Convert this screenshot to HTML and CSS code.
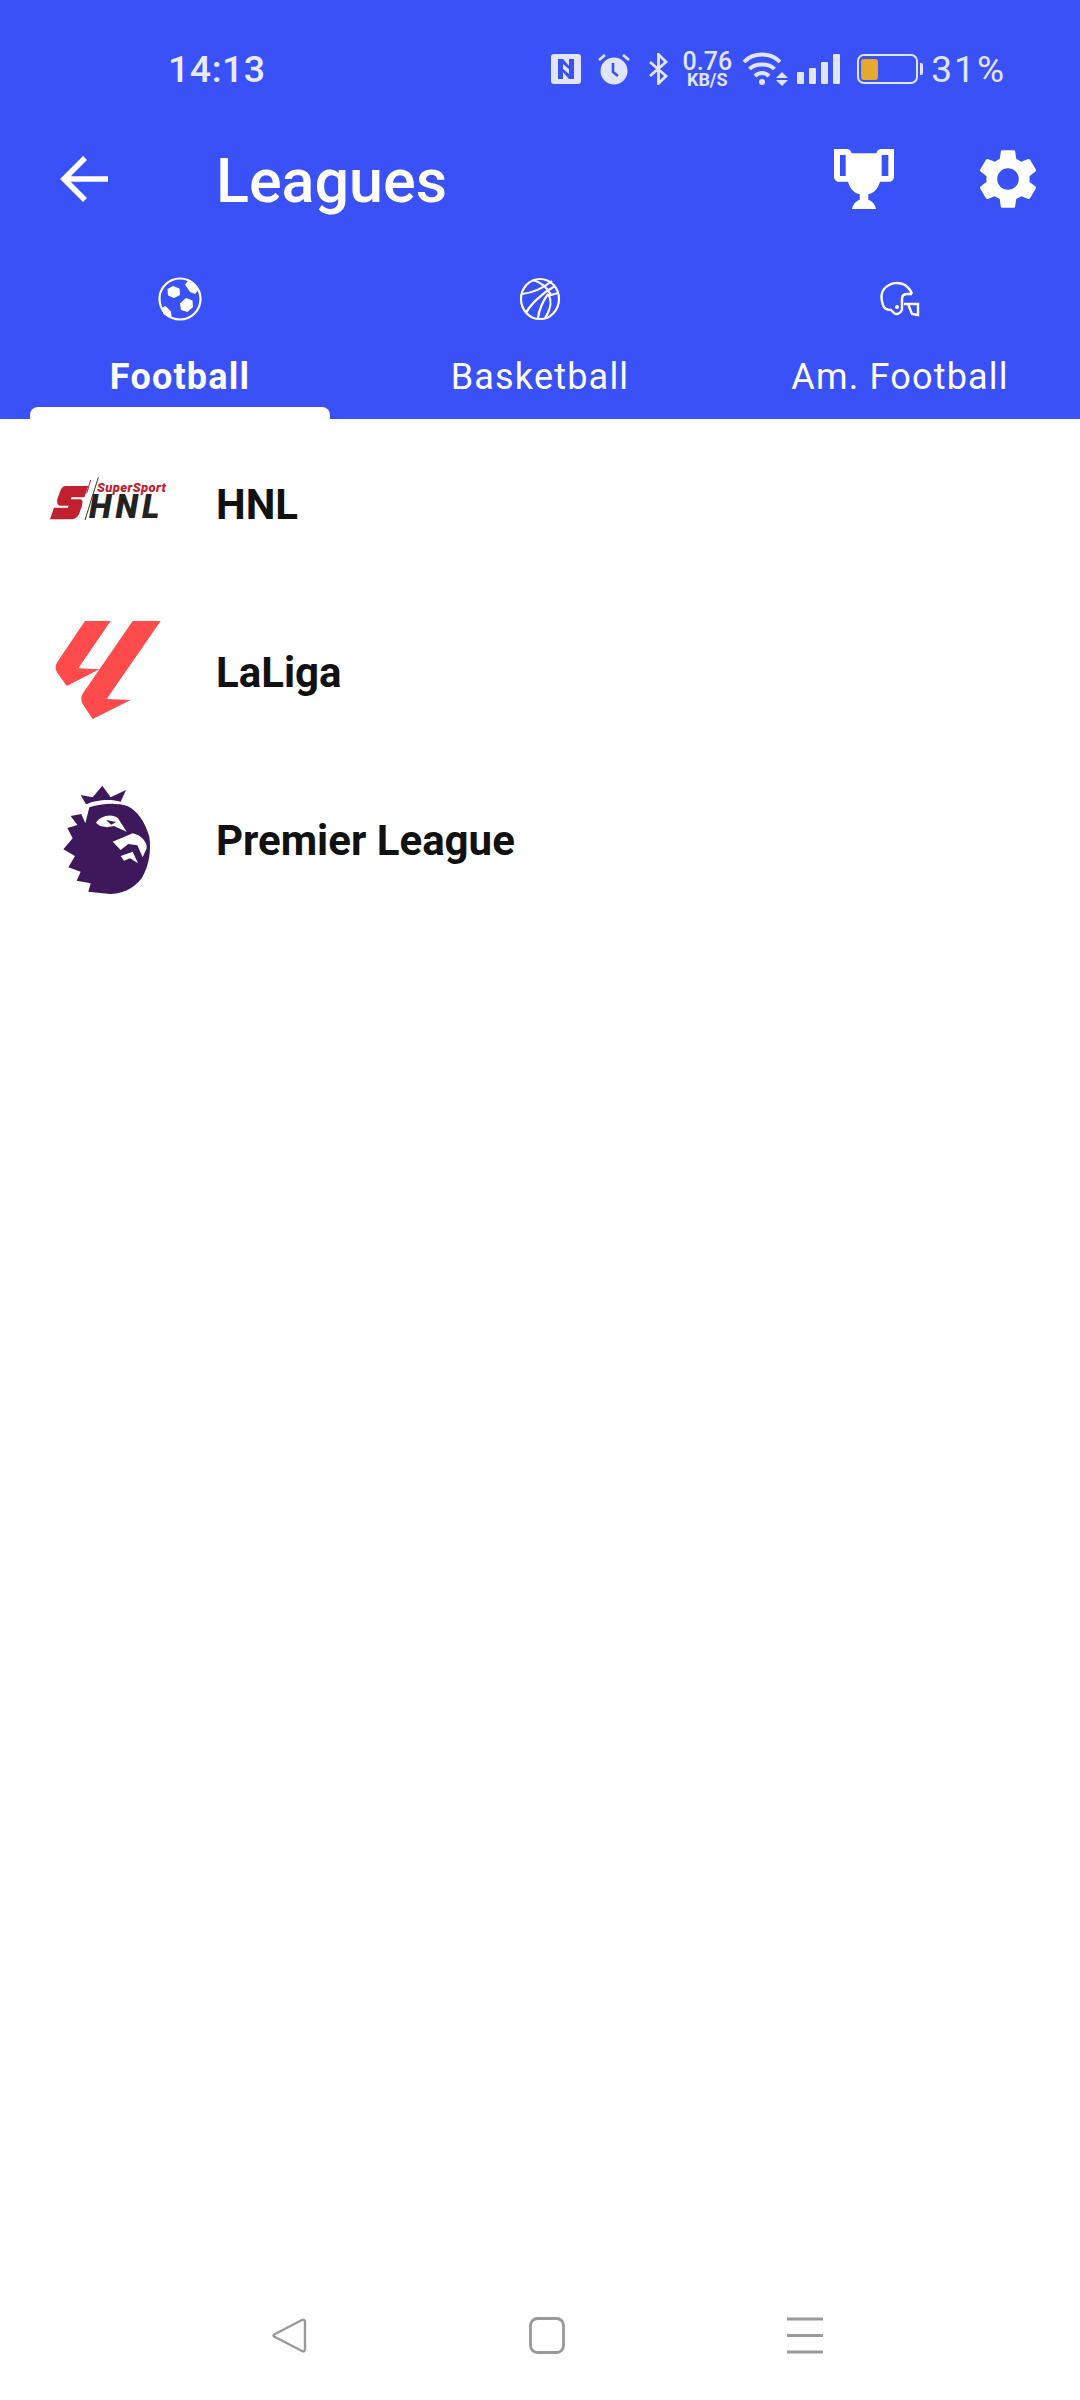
FILE: index.html
```html
<!DOCTYPE html>
<html lang="en">
<head>
<meta charset="utf-8">
<title>Leagues</title>
<link rel="stylesheet" href="styles.css">
</head>
<body>
<div class="app">
  <header class="header">
    <div class="status">
      <span class="clock">14:13</span>
      <div class="status-icons">
        <svg class="si-nfc" viewBox="0 0 30 30"><path fill="#e0e4fc" d="M3 0h24a3 3 0 0 1 3 3v24a3 3 0 0 1-3 3H3a3 3 0 0 1-3-3V3a3 3 0 0 1 3-3z"/><path fill="#3a51f7" d="M7 5h5l7 8v3l-7-6v15H7zM23 25h-5l-7-8v-3l7 6V5h5z"/></svg>
        <svg class="si-alarm" viewBox="0 0 32 32"><circle cx="16" cy="18" r="13.500" fill="#e0e4fc"/><path d="M1 7l6-5M31 7l-6-5" stroke="#e0e4fc" stroke-width="2.600"/><path d="M15 10v9l5 4" stroke="#3a51f7" stroke-width="2.600" fill="none"/></svg>
        <svg class="si-bt" viewBox="0 0 21 32"><path d="M2 9l16 14-7.500 7.500V1.500L18 9 2 23" stroke="#e0e4fc" stroke-width="2.800" fill="none"/></svg>
        <div class="speed"><span class="speed-n">0.76</span><span class="speed-u">KB/S</span></div>
        <svg class="si-wifi" viewBox="0 0 46 34"><path d="M2 10C11 0 29 0 38 10M7.500 17C13 11 27 11 32.500 17M13 24c4-4 10-4 14 0" stroke="#e0e4fc" stroke-width="4" fill="none"/><circle cx="20" cy="30" r="3" fill="#e0e4fc"/><path d="M34 26l6-6 6 6zM34 28h12l-6 6z" fill="#e0e4fc"/></svg>
        <div class="signal"><i class="b1"></i><i class="b2"></i><i class="b3"></i><i class="b4"></i></div>
        <div class="battery"><div class="battery-body"><div class="battery-fill"></div></div><div class="battery-cap"></div></div>
        <span class="pct">31%</span>
      </div>
    </div>
    <div class="toolbar">
      <svg class="back" viewBox="0 0 50 48"><path d="M48 24H5M25 3L4 24l21 21" stroke="#fff" stroke-width="5.600" fill="none"/></svg>
      <h1 class="title">Leagues</h1>
      <svg class="trophy" viewBox="162 87 180 180"><path fill="#fff" fill-rule="evenodd" d="M162 87h38c8 0 13 5 15 13h74c2-8 7-13 15-13h38v83c0 9-7 15-15 15h-27c-6 22-20 35-35 37v18c10 2 20 12 23 27h-72c3-15 13-25 23-27v-18c-15-2-29-15-35-37h-27c-8 0-15-6-15-15zM180 105v63h17v-63zM305 105v63h20v-63z"/></svg>
      <svg class="gear" viewBox="0 0 24 24"><path fill="#fff" d="M19.140 12.940c.04-.3.06-.61.06-.94 0-.32-.02-.64-.07-.94l2.030-1.580c.18-.14.23-.41.12-.61l-1.920-3.320c-.12-.22-.37-.29-.59-.22l-2.390.96c-.5-.38-1.030-.7-1.620-.94l-.36-2.540c-.04-.24-.24-.41-.48-.41h-3.840c-.24 0-.43.17-.47.41l-.36 2.540c-.59.24-1.130.57-1.620.94l-2.390-.96c-.22-.08-.47 0-.59.22L2.740 8.870c-.12.21-.08.47.12.61l2.030 1.580c-.05.3-.09.63-.09.94s.02.64.07.94l-2.030 1.580c-.18.14-.23.41-.12.61l1.920 3.320c.12.22.37.29.59.22l2.390-.96c.5.38 1.030.7 1.620.94l.36 2.540c.05.24.24.41.48.41h3.840c.24 0 .44-.17.47-.41l.36-2.540c.59-.24 1.130-.56 1.620-.94l2.390.96c.22.08.47 0 .59-.22l1.920-3.320c.12-.22.07-.47-.12-.61l-2.010-1.580zM12 15.600c-1.980 0-3.600-1.620-3.600-3.600s1.620-3.600 3.600-3.600 3.600 1.620 3.600 3.600-1.620 3.600-3.600 3.600z"/></svg>
    </div>
    <nav class="tabs">
      <div class="tab tab-active">
        <svg class="tab-icon" viewBox="0 0 44 44"><circle cx="22" cy="22" r="20.500" stroke="#fff" stroke-width="2.200" fill="none"/><path fill="#fff" d="M15 9l6.500 2.500.5 6.500-6 3-6-2.500-.5-6.500zM28 21l6.500 2.500.5 6.500-5.500 5-6.500-2-1-6.500zM30 4l5 2.500 5 7-3 3.500-5-2-5-7.500zM3.500 31l4-2 5.500 5.500.5 4.500-3 1.500-5-3.500z"/></svg>
        <span class="tab-label">Football</span>
        <div class="tab-bar"></div>
      </div>
      <div class="tab">
        <svg class="tab-icon" viewBox="0 0 44 44"><g stroke="#fff" stroke-width="2.200" fill="none"><ellipse cx="22" cy="22" rx="19" ry="20"/><path d="M4 17c9-1 20-5 30-13M15 3c7 2 14 7 18 15l7-2M37 9C24 16 12 28 8 36M30 17c4 6 3 15-3 24M20 41c1-8 5-17 10-24"/></g></svg>
        <span class="tab-label">Basketball</span>
      </div>
      <div class="tab">
        <svg class="tab-icon" viewBox="0 0 44 44"><g stroke="#fff" stroke-width="2.400" fill="none"><path d="M24 33c-2 4-6 5-8 3l-3-3c-4 0-7-1-8-5C3 22 3 15 7 11c6-6 14-6 20-3 4 3 6 6 7 9"/><path d="M34 17h-5c-3 0-5 2-5 5v11M26 27h14v11l-6-1-4-10"/></g><circle cx="19" cy="30" r="2" fill="#fff"/></svg>
        <span class="tab-label">Am. Football</span>
      </div>
    </nav>
  </header>
  <main class="list">
    <div class="row">
      <div class="logo">
        <svg class="logo-art" viewBox="54 -48 360 360"><path fill="#c0202f" d="M108 78H175L163 112H125L122 118H150C160 118 158 130 155 140L148 160C143 173 135 178 122 178H60L72 143H113L116 137H92C80 137 80 125 83 115L90 95C94 83 100 78 108 78Z"/><path stroke="#c0202f" stroke-width="3" d="M182 60L170 100"/><path stroke="#333" stroke-width="3" d="M205 52L165 180"/></svg>
        <span class="shnl-ss">SuperSport</span><span class="shnl-hnl">HNL</span>
      </div>
      <span class="name">HNL</span>
    </div>
    <div class="row">
      <div class="logo">
        <svg class="logo-art" viewBox="24 36 360 360"><path fill="#ff4b4b" d="M135 63H212L115 205L178 208L80 258L52 218C45 208 45 197 52 186ZM278 63H362L200 297L272 300L158 357L130 315C122 302 122 290 130 278Z"/></svg>
      </div>
      <span class="name">LaLiga</span>
    </div>
    <div class="row">
      <div class="logo">
        <svg class="logo-art" viewBox="-6 30 360 360"><path fill="#3d195b" d="M92 75L128 82L157 47L182 82L228 60L212 95C180 85 135 90 108 103ZM118 112C155 100 200 98 232 108C262 122 285 155 298 200C304 240 298 285 275 325C250 358 215 372 180 372L115 365L122 340L80 332L92 305L55 292L75 258L40 238L68 205L52 174L82 165L62 138L94 132L106 160Z"/><path fill="#fff" d="M138 158C150 138 185 128 204 145L230 185L192 168L172 172L150 168ZM188 215L248 190L264 195C280 205 292 220 290 235L278 262L262 226L235 222L212 240ZM212 258L248 245L264 280L240 265L222 272Z"/><path fill="#3d195b" d="M168 150L198 156L184 164Z"/></svg>
      </div>
      <span class="name">Premier League</span>
    </div>
  </main>
  <footer class="navbar">
    <svg class="nav-back" viewBox="0 0 36 37"><path d="M31 3L4 17c-2 1-2 2 0 3l27 14c2 1 3 0 3-2V5c0-2-1-3-3-2z" stroke="#999" stroke-width="2.400" fill="none"/></svg>
    <svg class="nav-home" viewBox="0 0 36 37"><rect x="1.500" y="1.500" width="33" height="34" rx="7" stroke="#999" stroke-width="2.800" fill="none"/></svg>
    <svg class="nav-menu" viewBox="0 0 36 37"><path d="M0 2h36M0 18.500h36M0 35h36" stroke="#999" stroke-width="3" fill="none"/></svg>
  </footer>
</div>
</body>
</html>
```

FILE: styles.css
```css
* { box-sizing: border-box; }
html, body { margin: 0; padding: 0; }
body { background: #fff; font-family: Roboto, "Liberation Sans", sans-serif; }
.app { width: 1080px; height: 2400px; display: flex; flex-direction: column; }
.header { background: #3a51f7; height: 419px; color: #fff; display: flex; flex-direction: column; flex: none; }
.status { height: 138px; padding: 0 74px 0 168px; display: flex; justify-content: space-between; align-items: center; flex: none; }
.clock { font-size: 37.500px; font-weight: 500; color: #e8ebfd; letter-spacing: 0.5px; }
.status-icons { display: flex; align-items: center; color: #e0e4fc; }
.si-nfc { width: 30px; height: 30px; margin-right: 17px; }
.si-alarm { width: 32px; height: 32px; margin-right: 18px; }
.si-bt { width: 21px; height: 32px; margin-right: 15px; }
.speed { display: flex; flex-direction: column; align-items: center; width: 46px; margin-right: 12px; }
.speed-n { font-size: 25px; font-weight: 500; line-height: 20px; }
.speed-u { font-size: 18px; font-weight: 700; line-height: 15px; }
.si-wifi { width: 46px; height: 34px; margin-right: 9px; }
.signal { display: flex; align-items: flex-end; gap: 5px; height: 30px; margin-right: 17px; }
.signal i { width: 7px; background: #e0e4fc; display: block; border-radius: 1px; }
.b1 { height: 12px; }
.b2 { height: 16px; }
.b3 { height: 22px; }
.b4 { height: 30px; }
.battery { display: flex; align-items: center; margin-right: 8px; }
.battery-body { width: 61px; height: 30px; border: 2px solid #e0e4fc; border-radius: 7px; padding: 3px 2px; }
.battery-fill { width: 17px; height: 21px; background: #e4a92f; border-radius: 3px; }
.battery-cap { width: 3px; height: 12px; background: #e0e4fc; margin-left: 2px; border-radius: 0 2px 2px 0; }
.pct { font-size: 37px; font-weight: 400; letter-spacing: 2px; }
.toolbar { height: 82px; display: flex; align-items: center; padding: 0 36px 0 60px; flex: none; }
.back { width: 50px; height: 48px; flex: none; }
.title { margin: 0 0 0 106px; padding-top: 4px; font-size: 61px; font-weight: 500; line-height: 1; flex: 1; }
.trophy { width: 60px; height: 60px; margin-right: 78px; flex: none; }
.gear { width: 72px; height: 72px; flex: none; }
.tabs { display: flex; height: 199px; flex: none; }
.tab { position: relative; width: 360px; display: flex; flex-direction: column; align-items: center; }
.tab-icon { width: 44px; height: 44px; margin-top: 57px; }
.tab-label { font-size: 36px; line-height: 40px; margin-top: 36px; font-weight: 400; letter-spacing: 1.2px; }
.tab-active .tab-label { font-weight: 700; }
.tab-bar { position: absolute; left: 30px; bottom: 0; width: 300px; height: 12px; background: #fff; border-radius: 8px 8px 0 0; }
.list { flex: 1; display: flex; flex-direction: column; padding-top: 1px; }
.row { height: 168px; display: flex; align-items: center; padding-left: 48px; }
.logo { position: relative; width: 120px; height: 120px; flex: none; }
.logo-art { display: block; width: 120px; height: 120px; }
.shnl-ss { position: absolute; left: 49px; top: 38px; font-size: 13px; line-height: 12px; font-weight: 900; font-style: italic; color: #c0202f; white-space: nowrap; letter-spacing: 0.4px; }
.shnl-hnl { position: absolute; left: 41px; top: 51px; font-size: 33px; line-height: 24px; font-weight: 900; font-style: italic; color: #222; letter-spacing: 4px; }
.name { margin-left: 48px; font-size: 42px; font-weight: 700; color: #111; }
.navbar { height: 130px; flex: none; display: flex; justify-content: center; align-items: center; padding-left: 14px; gap: 222px; }
.nav-back, .nav-home, .nav-menu { width: 36px; height: 37px; }
```
